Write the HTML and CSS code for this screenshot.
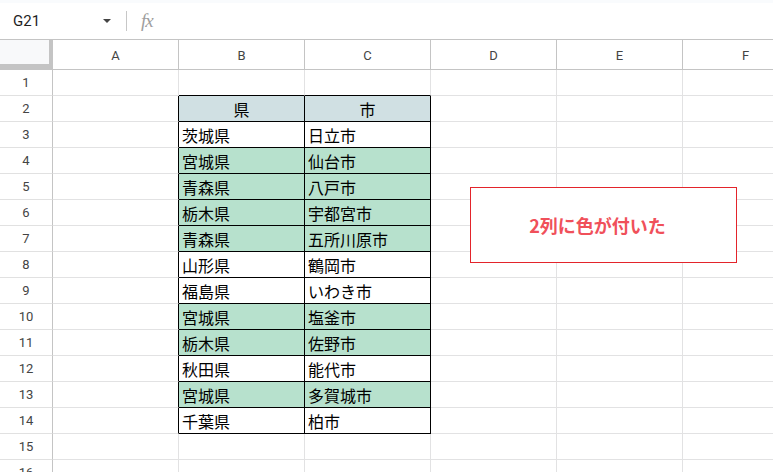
FILE: index.html
```html
<!DOCTYPE html>
<html lang="ja">
<head>
    <meta charset="UTF-8">
    <meta name="viewport" content="width=device-width, initial-scale=1.0">
    <title>シート</title>
    <link rel="stylesheet" href="styles.css">
</head>
<body>

<div class="page">
    <div class="formulaBar">
        <div class="nameBox">
            <span class="cellRef">G21</span>
            <span class="arrow"></span>
        </div>
        <div class="sep"></div>
        <span class="fx">fx</span>
    </div>

    <div class="grid">
        <div class="row head">
            <div class="corner"></div>
            <div class="col">A</div>
            <div class="col">B</div>
            <div class="col">C</div>
            <div class="col">D</div>
            <div class="col">E</div>
            <div class="col">F</div>
        </div>
        <div class="row">
            <div class="num">1</div>
            <div class="cell"></div>
            <div class="cell top"></div>
            <div class="cell top"></div>
            <div class="cell"></div>
            <div class="cell"></div>
            <div class="cell"></div>
        </div>
        <div class="row">
            <div class="num">2</div>
            <div class="cell left"></div>
            <div class="cell t th">県</div>
            <div class="cell t th">市</div>
            <div class="cell"></div>
            <div class="cell"></div>
            <div class="cell"></div>
        </div>
        <div class="row">
            <div class="num">3</div>
            <div class="cell left"></div>
            <div class="cell t">茨城県</div>
            <div class="cell t">日立市</div>
            <div class="cell"></div>
            <div class="cell"></div>
            <div class="cell"></div>
        </div>
        <div class="row">
            <div class="num">4</div>
            <div class="cell left"></div>
            <div class="cell t green">宮城県</div>
            <div class="cell t green">仙台市</div>
            <div class="cell"></div>
            <div class="cell"></div>
            <div class="cell"></div>
        </div>
        <div class="row">
            <div class="num">5</div>
            <div class="cell left"></div>
            <div class="cell t green">青森県</div>
            <div class="cell t green">八戸市</div>
            <div class="cell"></div>
            <div class="cell"></div>
            <div class="cell"></div>
        </div>
        <div class="row">
            <div class="num">6</div>
            <div class="cell left"></div>
            <div class="cell t green">栃木県</div>
            <div class="cell t green">宇都宮市</div>
            <div class="cell"></div>
            <div class="cell"></div>
            <div class="cell"></div>
        </div>
        <div class="row">
            <div class="num">7</div>
            <div class="cell left"></div>
            <div class="cell t green">青森県</div>
            <div class="cell t green">五所川原市</div>
            <div class="cell"></div>
            <div class="cell"></div>
            <div class="cell"></div>
        </div>
        <div class="row">
            <div class="num">8</div>
            <div class="cell left"></div>
            <div class="cell t">山形県</div>
            <div class="cell t">鶴岡市</div>
            <div class="cell"></div>
            <div class="cell"></div>
            <div class="cell"></div>
        </div>
        <div class="row">
            <div class="num">9</div>
            <div class="cell left"></div>
            <div class="cell t">福島県</div>
            <div class="cell t">いわき市</div>
            <div class="cell"></div>
            <div class="cell"></div>
            <div class="cell"></div>
        </div>
        <div class="row">
            <div class="num">10</div>
            <div class="cell left"></div>
            <div class="cell t green">宮城県</div>
            <div class="cell t green">塩釜市</div>
            <div class="cell"></div>
            <div class="cell"></div>
            <div class="cell"></div>
        </div>
        <div class="row">
            <div class="num">11</div>
            <div class="cell left"></div>
            <div class="cell t green">栃木県</div>
            <div class="cell t green">佐野市</div>
            <div class="cell"></div>
            <div class="cell"></div>
            <div class="cell"></div>
        </div>
        <div class="row">
            <div class="num">12</div>
            <div class="cell left"></div>
            <div class="cell t">秋田県</div>
            <div class="cell t">能代市</div>
            <div class="cell"></div>
            <div class="cell"></div>
            <div class="cell"></div>
        </div>
        <div class="row">
            <div class="num">13</div>
            <div class="cell left"></div>
            <div class="cell t green">宮城県</div>
            <div class="cell t green">多賀城市</div>
            <div class="cell"></div>
            <div class="cell"></div>
            <div class="cell"></div>
        </div>
        <div class="row">
            <div class="num">14</div>
            <div class="cell left"></div>
            <div class="cell t">千葉県</div>
            <div class="cell t">柏市</div>
            <div class="cell"></div>
            <div class="cell"></div>
            <div class="cell"></div>
        </div>
        <div class="row">
            <div class="num">15</div>
            <div class="cell"></div>
            <div class="cell"></div>
            <div class="cell"></div>
            <div class="cell"></div>
            <div class="cell"></div>
            <div class="cell"></div>
        </div>
        <div class="row">
            <div class="num">16</div>
            <div class="cell"></div>
            <div class="cell"></div>
            <div class="cell"></div>
            <div class="cell"></div>
            <div class="cell"></div>
            <div class="cell"></div>
        </div>
    </div>

    <div class="callout">2列に色が付いた</div>
</div>

</body>
</html>
```

FILE: styles.css
```css
body {
    margin: 0;
    background: #fff;
    font-family: Roboto, Arial, "Noto Sans CJK JP", sans-serif;
}
.page {
    position: relative;
    width: 773px;
    height: 472px;
    overflow: hidden;
}
.formulaBar {
    display: flex;
    align-items: center;
    height: 36px;
    border-top: 3px solid #f9fbfd;
    background: #fff;
}
.nameBox {
    display: flex;
    align-items: center;
    justify-content: space-between;
    width: 98px;
    padding: 0 15px 0 13px;
}
.cellRef {
    font-size: 15px;
    color: #1f1f1f;
}
.arrow {
    width: 0;
    height: 0;
    border-left: 4px solid transparent;
    border-right: 4px solid transparent;
    border-top: 4px solid #444;
}
.sep {
    width: 1px;
    height: 20px;
    background: #c7c7c7;
}
.fx {
    margin-left: 14px;
    font-family: "Liberation Serif", serif;
    font-style: italic;
    font-size: 19px;
    color: #9e9e9e;
    letter-spacing: -1px;
}
.grid {
    width: 808px;
}
.row {
    display: flex;
    height: 26px;
}
.row.head {
    height: 31px;
}
.corner {
    flex: none;
    box-sizing: border-box;
    width: 53px;
    background: #f8f9fa;
    border-top: 1px solid #c4c4c4;
    border-right: 4px solid #c4c4c4;
    border-bottom: 6px solid #c4c4c4;
}
.col {
    flex: none;
    box-sizing: border-box;
    width: 126px;
    display: flex;
    align-items: center;
    justify-content: center;
    border-top: 1px solid #c4c4c4;
    border-right: 1px solid #c4c4c4;
    border-bottom: 1px solid #c4c4c4;
    font-size: 13px;
    color: #444;
    padding-top: 1px;
}
.num {
    flex: none;
    box-sizing: border-box;
    width: 53px;
    display: flex;
    align-items: center;
    justify-content: center;
    border-right: 1px solid #c4c4c4;
    border-bottom: 1px solid #e1e1e1;
    font-size: 13px;
    color: #444;
}
.cell {
    flex: none;
    box-sizing: border-box;
    width: 126px;
    display: flex;
    align-items: center;
    padding: 1px 3px 0;
    border-right: 1px solid #e2e2e3;
    border-bottom: 1px solid #e2e2e3;
    font-family: "Noto Sans CJK JP", sans-serif;
    font-size: 16px;
    color: #000;
    white-space: nowrap;
}
.cell.top {
    border-bottom-color: #000;
}
.cell.left {
    border-right-color: #000;
}
.cell.t {
    border-right-color: #000;
    border-bottom-color: #000;
}
.cell.th {
    justify-content: center;
    background: #d0e0e3;
}
.cell.green {
    background: #b7e1cd;
}
.callout {
    position: absolute;
    left: 470px;
    top: 187px;
    box-sizing: border-box;
    width: 267px;
    height: 76px;
    display: flex;
    align-items: center;
    justify-content: center;
    padding-right: 12px;
    background: #fff;
    border: 1px solid #e3242b;
    font-family: "Noto Sans CJK JP", sans-serif;
    font-weight: 700;
    font-size: 18px;
    color: #f0505a;
}
```
